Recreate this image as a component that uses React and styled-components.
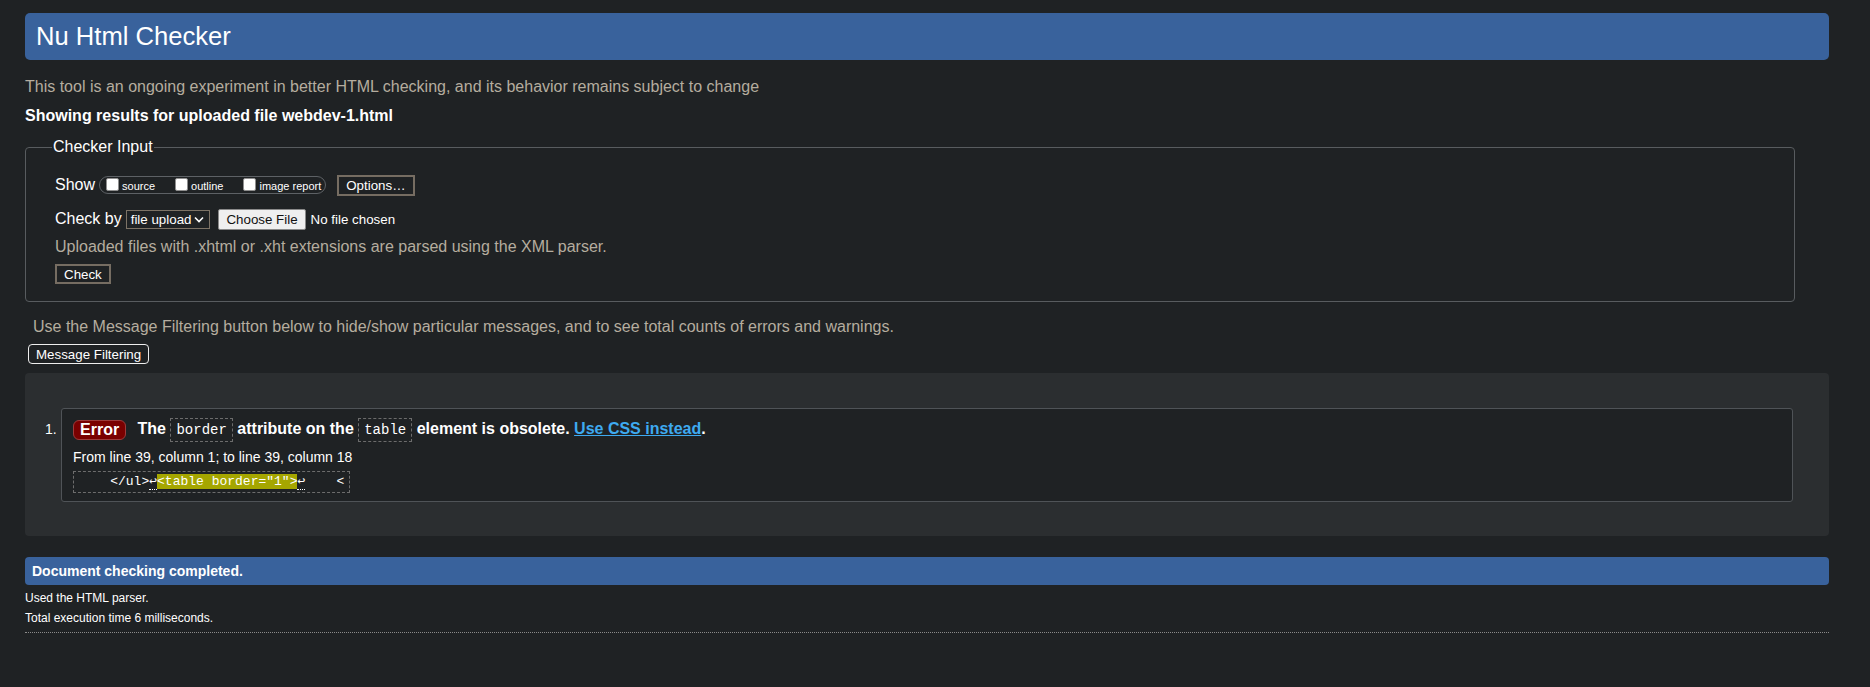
import React from "react";
import styled, { createGlobalStyle } from "styled-components";

const GlobalStyle = createGlobalStyle`
  html, body {
    margin: 0;
    background: #1f2224;
  }
  body {
    font-family: "Liberation Sans", Arial, sans-serif;
    color: #e8e6e3;
  }
`;

const Page = styled.div`
  padding: 13px 41px 0 25px;
`;

const Header = styled.h1`
  margin: 0;
  height: 47px;
  display: flex;
  align-items: center;
  padding-left: 11px;
  background: #39629c;
  border-radius: 5px;
  color: #ffffff;
  font-size: 25.6px;
  font-weight: normal;
`;

const Intro = styled.p`
  margin: ${({ $top }) => $top || 0}px 0 0 ${({ $indent }) => $indent || 0}px;
  font-size: 16px;
  line-height: 18px;
  color: #b5ad9f;
`;

const Showing = styled.p`
  margin: 11px 0 0;
  font-size: 16px;
  line-height: 18px;
  font-weight: bold;
  color: #ffffff;
`;

const Fieldset = styled.fieldset`
  margin: 13px 34px 0 0;
  padding: 0 20px 17px 29px;
  border: 1px solid #585c5f;
  border-radius: 4px;
  min-inline-size: 0;
`;

const Legend = styled.legend`
  margin-left: -3px;
  padding: 0 1px;
  font-size: 16px;
  line-height: 18px;
  color: #ffffff;
`;

const Row = styled.div`
  display: flex;
  align-items: center;
  height: ${({ $h }) => $h || 22}px;
  margin-top: ${({ $top }) => $top || 0}px;
`;

const RowLabel = styled.span`
  font-size: 16px;
  color: #ffffff;
`;

const Pill = styled.span`
  display: flex;
  align-items: center;
  height: 18px;
  box-sizing: border-box;
  margin-left: 4px;
  padding: 0 4px 0 6px;
  border: 1px solid #5d6165;
  border-radius: 9px;
`;

const Option = styled.label`
  display: flex;
  align-items: center;
  margin-right: ${({ $last }) => ($last ? 0 : 20)}px;
  font-size: 11px;
  color: #ffffff;
`;

const Box = styled.input`
  appearance: none;
  width: 13px;
  height: 13px;
  margin: 0 3px 1px 0;
  background: #ffffff;
  border: 1px solid #8f8f8f;
  border-radius: 2px;
`;

const OptionText = styled.span`
  padding-top: 2px;
`;

const DarkButton = styled.button`
  height: ${({ $h }) => $h || 21}px;
  margin-left: ${({ $left }) => $left || 0}px;
  padding: 0 7px;
  box-sizing: border-box;
  background: #1f2224;
  color: #ffffff;
  border: 2px solid #766d62;
  border-radius: 0;
  font-family: "Liberation Sans", Arial, sans-serif;
  font-size: 13.33px;
`;

const SelectBox = styled.span`
  display: flex;
  align-items: center;
  gap: 3px;
  height: 19px;
  box-sizing: border-box;
  margin-left: 4px;
  padding: 0 5px 0 4px;
  border: 1px solid #7d7366;
  font-size: 13.33px;
  color: #ffffff;
`;

const FileButton = styled.button`
  height: 21px;
  margin-left: 8px;
  padding: 0 7px;
  box-sizing: border-box;
  background: #efefef;
  color: #111111;
  border: 1px solid #8a8a8a;
  border-radius: 2px;
  font-family: "Liberation Sans", Arial, sans-serif;
  font-size: 13.33px;
`;

const FileName = styled.span`
  margin-left: 5px;
  font-size: 13.33px;
  color: #ffffff;
`;

const FilterButton = styled.button`
  display: block;
  height: 20px;
  margin: 8px 0 0 3px;
  padding: 0 7px;
  background: #1f2224;
  color: #ffffff;
  border: 1px solid #eeeeee;
  border-radius: 4px;
  font-family: "Liberation Sans", Arial, sans-serif;
  font-size: 13.33px;
`;

const Panel = styled.div`
  margin-top: 9px;
  padding: 35px 36px 34px 20px;
  background: #2b2e30;
  border-radius: 4px;
`;

const MessageRow = styled.div`
  display: flex;
  align-items: flex-start;
`;

const Num = styled.span`
  width: 16px;
  margin-top: 9px;
  font-size: 14px;
  line-height: 24px;
  color: #ffffff;
`;

const Message = styled.div`
  flex: 1;
  padding: 8px 11px 8px 11px;
  background: #1f2224;
  border: 1px solid #4f5357;
  border-radius: 3px;
`;

const Headline = styled.div`
  font-size: 16px;
  line-height: 24px;
  font-weight: bold;
  color: #ffffff;
  white-space: nowrap;
`;

const Badge = styled.span`
  display: inline-block;
  vertical-align: middle;
  height: 20px;
  box-sizing: border-box;
  margin-right: 7px;
  padding: 0 6px;
  line-height: 18px;
  background: #7a0000;
  border: 1px solid #9c3b3b;
  border-radius: 6px;
  font-size: 16px;
`;

const Code = styled.code`
  display: inline-block;
  vertical-align: middle;
  height: 24px;
  box-sizing: border-box;
  padding: 0 5px;
  border: 1px dashed #6c6c6c;
  font-family: "Liberation Mono", "DejaVu Sans Mono", monospace;
  font-size: 14px;
  font-weight: normal;
  line-height: 22px;
`;

const Link = styled.a`
  color: #3eaaf0;
  text-decoration: underline;
`;

const Location = styled.p`
  margin: 6px 0 0;
  font-size: 14px;
  line-height: 18px;
  color: #ffffff;
`;

const Extract = styled.pre`
  width: fit-content;
  height: 22px;
  box-sizing: border-box;
  margin: 5px 0 0;
  padding: 0 5px;
  border: 1px dashed #6c6c6c;
  font-family: "Liberation Mono", "DejaVu Sans Mono", monospace;
  font-size: 13px;
  line-height: 20px;
  color: #ffffff;
`;

const Mark = styled.mark`
  background: #a5a600;
  color: #ffffff;
`;

const Lf = styled.span`
  border-bottom: 1px dotted #ffffff;
`;

const Bar = styled.div`
  margin-top: 21px;
  height: 28px;
  padding-left: 7px;
  background: #39629c;
  border-radius: 4px;
  font-size: 14px;
  line-height: 28px;
  font-weight: bold;
  color: #ffffff;
`;

const Detail = styled.p`
  margin: ${({ $top }) => $top || 0}px 0 0;
  font-size: 12px;
  line-height: 20px;
  color: #ffffff;
`;

const Rule = styled.hr`
  margin: 4px 0 0;
  border: 0;
  border-top: 1px dotted #8a8a8a;
`;

const Footer = styled.p`
  margin: 50px 0 0;
  font-size: 13px;
  line-height: 18px;
  color: #ffffff;
`;

const FooterLink = styled.a`
  color: #3ea6e8;
  text-decoration: none;
`;

const Chevron = () => (
  <svg width="10" height="7" viewBox="0 0 10 7" fill="none">
    <path d="M1 1.5l4 4 4-4" stroke="#ffffff" strokeWidth="1.6" />
  </svg>
);

const App = () => {
  return (
    <Page>
      <GlobalStyle />
      <Header>Nu Html Checker</Header>
      <Intro $top={18}>
        This tool is an ongoing experiment in better HTML checking, and its behavior remains subject to change
      </Intro>
      <Showing>Showing results for uploaded file webdev-1.html</Showing>

      <Fieldset>
        <Legend>Checker Input</Legend>
        <Row $top={18}>
          <RowLabel>Show</RowLabel>
          <Pill>
            <Option>
              <Box type="checkbox" />
              <OptionText>source</OptionText>
            </Option>
            <Option>
              <Box type="checkbox" />
              <OptionText>outline</OptionText>
            </Option>
            <Option $last>
              <Box type="checkbox" />
              <OptionText>image report</OptionText>
            </Option>
          </Pill>
          <DarkButton $left={11}>Options…</DarkButton>
        </Row>
        <Row $top={12}>
          <RowLabel>Check by</RowLabel>
          <SelectBox>
            file upload
            <Chevron />
          </SelectBox>
          <FileButton>Choose File</FileButton>
          <FileName>No file chosen</FileName>
        </Row>
        <Intro $top={8}>Uploaded files with .xhtml or .xht extensions are parsed using the XML parser.</Intro>
        <Row $top={8} $h={20}>
          <DarkButton $h={20}>Check</DarkButton>
        </Row>
      </Fieldset>

      <Intro $top={16} $indent={8}>
        Use the Message Filtering button below to hide/show particular messages, and to see total counts of errors and warnings.
      </Intro>
      <FilterButton>Message Filtering</FilterButton>

      <Panel>
        <MessageRow>
          <Num>1.</Num>
          <Message>
            <Headline>
              <Badge>Error</Badge> The <Code>border</Code> attribute on the <Code>table</Code> element is obsolete.{" "}
              <Link href="#">Use CSS instead</Link>.
            </Headline>
            <Location>From line 39, column 1; to line 39, column 18</Location>
            <Extract>
              {"    </ul>"}
              <Lf>↩</Lf>
              <Mark>{'<table border="1">'}</Mark>
              <Lf>↩</Lf>
              {"    <"}
            </Extract>
          </Message>
        </MessageRow>
      </Panel>

      <Bar>Document checking completed.</Bar>
      <Detail $top={3}>Used the HTML parser.</Detail>
      <Detail>Total execution time 6 milliseconds.</Detail>
      <Rule />
      <Footer>
        <FooterLink href="#">About this checker</FooterLink> · <FooterLink href="#">Report an issue</FooterLink> · Version: 21.9.1
      </Footer>
    </Page>
  );
};

export default App;
